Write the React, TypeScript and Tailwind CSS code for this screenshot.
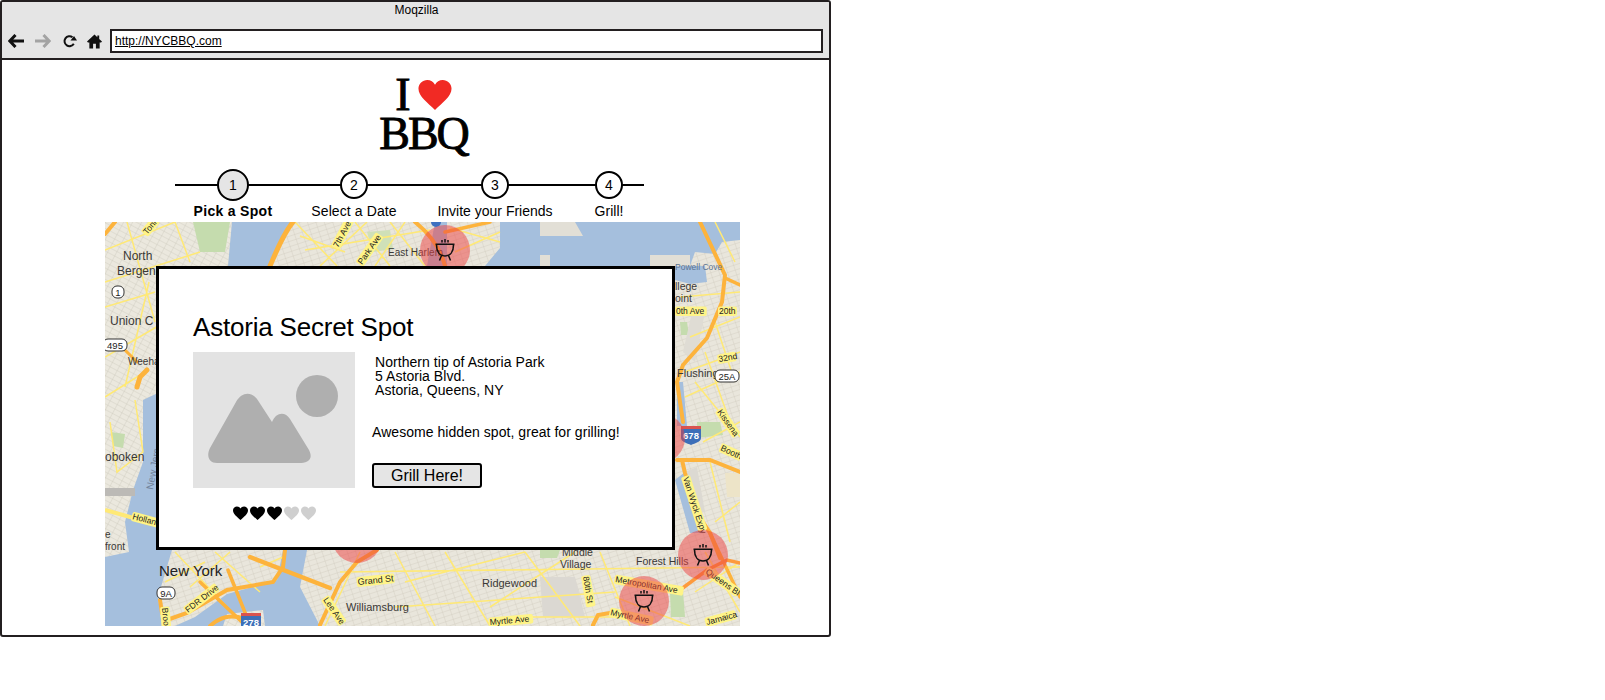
const sans = { fontFamily: '"Liberation Sans", Arial, sans-serif' };

function Heart({ className }: { className: string }) {
  return (
    <svg viewBox="0 0 32 30" className={className} fill="currentColor">
      <path d="M16 29C9 22 0 16 0 8.500C0 3.500 4 0 8.500 0C11.800 0 14.500 1.800 16 4.500C17.500 1.800 20.200 0 23.500 0C28 0 32 3.500 32 8.500C32 16 23 22 16 29Z" />
    </svg>
  );
}

function BrowserBar() {
  return (
    <div className="h-[58px] border-b-2 border-[#231f20] bg-[#e5e5e5]">
      <div className="h-[24px] pl-[2px] pt-[1px] text-center text-[12px] leading-[14px] text-black">Moqzilla</div>
      <div className="flex h-[27px] items-center pl-[6px] pr-[6px] pt-[3px]">
        <svg viewBox="0 0 16 14" className="h-[14px] w-[16px] text-[#111]">
          <path d="M7.500 1 1.800 7 7.500 13M2.500 7H16" fill="none" stroke="currentColor" strokeWidth="3" />
        </svg>
        <svg viewBox="0 0 16 14" className="ml-[11px] h-[14px] w-[16px] text-[#a3a3a3]">
          <path d="M8.500 1 14.200 7 8.500 13M13.500 7H0" fill="none" stroke="currentColor" strokeWidth="3" />
        </svg>
        <svg viewBox="0 0 15 14" className="ml-[11px] h-[14px] w-[15px] text-[#111]">
          <path d="M11.800 9.800A5 5 0 1 1 10.500 3.200" fill="none" stroke="currentColor" strokeWidth="2" />
          <path d="M8.500 6.500H15L12 2Z" fill="currentColor" />
        </svg>
        <svg viewBox="0 0 16 15" className="ml-[10px] h-[15px] w-[15px] text-[#111]">
          <path d="M8 0 0 7.500 1 8.500H2.500V15H6.500V10H9.500V15H13.500V8.500H15L16 7.500 13 4.700V1H11V2.900Z" fill="currentColor" />
        </svg>
        <div className="ml-[8px] flex h-[24px] flex-1 items-center border-2 border-[#231f20] bg-white pl-[3px] text-[12px] text-black underline">
          http://NYCBBQ.com
        </div>
      </div>
    </div>
  );
}

const steps = [
  { n: '1', label: 'Pick a Spot', active: true, w: 'w-[121px]', track: 'tracking-[0.3px]' },
  { n: '2', label: 'Select a Date', active: false, w: 'w-[141px]', track: 'tracking-[0.1px]' },
  { n: '3', label: 'Invite your Friends', active: false, w: 'w-[114px]', track: 'tracking-[0px]' },
  { n: '4', label: 'Grill!', active: false, w: 'w-[60px]', track: 'tracking-[0px]' },
];

function Stepper() {
  return (
    <div className="relative ml-[173px] mt-[13px] h-[53px] w-[469px]">
      <div className="absolute left-0 right-0 top-[15px] h-[2px] bg-black" />
      <div className="relative flex pl-[42px]">
        {steps.map((s) => (
          <div key={s.n} className={`flex ${s.w} shrink-0 flex-col items-start`}>
            <div className="relative h-[32px] w-[32px]">
              <div
                className={
                  s.active
                    ? 'absolute left-0 top-0 flex h-[32px] w-[32px] items-center justify-center rounded-full border-2 border-black bg-[#e5e5e5] text-[14px] leading-none'
                    : 'absolute left-[2px] top-[2px] flex h-[28px] w-[28px] items-center justify-center rounded-full border-2 border-black bg-white text-[14px] leading-none'
                }
              >
                {s.n}
              </div>
            </div>
            <div className="flex w-[32px] justify-center">
              <span className={`whitespace-nowrap text-[14px] leading-[20px] ${s.track} ${s.active ? 'font-bold' : 'font-normal'}`}>
                {s.label}
              </span>
            </div>
          </div>
        ))}
      </div>
    </div>
  );
}

function Grill({ x, y }: { x: number; y: number }) {
  return (
    <g transform={`translate(${x} ${y})`} fill="none" stroke="#111" strokeWidth="1.500">
      <circle r="25" fill="#ee3f3f" fillOpacity="0.5" stroke="none" />
      <path d="M-9.500-5.700H9.500M-8.500-5C-8.500 2-5 6 0 6S8.500 2 8.500-5" strokeWidth="1.600" />
      <path d="M-3.500 5.500-5.500 10.500M3.500 5.500 5.500 10.500M-3-10V-7.500M0-11V-7.500M3-10V-7.500" />
    </g>
  );
}

function MapLabel({ x, y, t, size = 11, rot = 0, road = false, color = '#3a3836' }: { x: number; y: number; t: string; size?: number; rot?: number; road?: boolean; color?: string }) {
  return (
    <g transform={`translate(${x} ${y}) rotate(${rot})`}>
      {road && <rect x={-1} y={-size + 1} width={t.length * size * 0.5 + 2} height={size + 1} fill="#fff487" rx="2" />}
      <text fontSize={size} fill={road ? '#222' : color} fontFamily="Liberation Sans, Arial, sans-serif">
        {t}
      </text>
    </g>
  );
}

function Shield({ x, y, t }: { x: number; y: number; t: string }) {
  return (
    <g transform={`translate(${x} ${y})`}>
      <rect x={-t.length * 3 - 3} y={-6} width={t.length * 6 + 6} height={12} rx={5} fill="#fff" stroke="#333" />
      <text textAnchor="middle" y={3.500} fontSize="9.500" fill="#222" fontFamily="Liberation Sans, Arial, sans-serif">{t}</text>
    </g>
  );
}

function Interstate({ x, y, t }: { x: number; y: number; t: string }) {
  return (
    <g transform={`translate(${x} ${y})`}>
      <path d="M-10-5H10V5C10 9 4 10 0 12C-4 10-10 9-10 5Z" fill="#3d6fb8" />
      <rect x="-10" y="-7" width="20" height="3" fill="#d9534f" />
      <text textAnchor="middle" y={5.500} fontSize="9.500" fontWeight="bold" fill="#fff" fontFamily="Liberation Sans, Arial, sans-serif">{t}</text>
    </g>
  );
}

function CityMap() {
  return (
    <svg viewBox="0 0 635 404" className="block h-[404px] w-[635px]">
      <defs>
        <pattern id="blocks" width="8" height="5" patternUnits="userSpaceOnUse" patternTransform="rotate(28)">
          <rect width="8" height="5" fill="#ebe8de" />
          <path d="M0 0H8M0 0V5" stroke="#c9c4b8" strokeWidth="0.700" />
        </pattern>
        <pattern id="blocks2" width="8" height="5" patternUnits="userSpaceOnUse" patternTransform="rotate(-18)">
          <rect width="8" height="5" fill="#e9e6dc" />
          <path d="M0 0H8M0 0V5" stroke="#cbc6ba" strokeWidth="0.700" />
        </pattern>
      </defs>
      <rect width="635" height="404" fill="url(#blocks2)" />
      <path d="M0 0H127L123 44 90 120 55 165 38 178V404H0Z" fill="url(#blocks)" />

      {/* water */}
      <path d="M127 0H187L165 44 130 100 67 328 53 375 57 404H0V335L24 330 20 300 28 268 38 240 38 178 55 170 100 90 123 44Z" fill="#a5bfdd" />
      <path d="M330 0H342V44H322Z" fill="#a5bfdd" />
      <path d="M395 0H635V18L617 20 610 32 590 30 585 44H380L395 26Z" fill="#a5bfdd" />
      <path d="M435 14H478L470 0H435ZM435 33H445V44H435ZM545 33H585V44H545Z" fill="#e2dfd6" />
      <path d="M570 44H600L602 60 585 62 570 58Z" fill="#a5bfdd" />
      <path d="M572 160H578L582 204 572 204ZM570 258 580 250 592 291 598 311 585 311Z" fill="#a5bfdd" />
      <path d="M178 328 172 358 122 372 90 395 70 404H215L195 365 202 328Z" fill="#a5bfdd" />
      <path d="M122 392 158 388 160 404H118Z" fill="url(#blocks)" />

      {/* parks and flat areas */}
      <path d="M88 0H125L120 30 95 30Z" fill="#c5dcae" />
      <path d="M262 10 285 8 288 27 268 30Z" fill="#cfe0b8" />
      <path d="M575 100 582 100 584 113 576 113Z" fill="#c5dcae" />
      <path d="M592 200H615L618 213 592 216Z" fill="#c5dcae" />
      <path d="M620 251H635V275L622 275Z" fill="#ede4c8" />
      <path d="M435 328 455 328 452 336 435 336Z" fill="#c5dcae" />
      <path d="M565 371 578 369 580 395 566 395Z" fill="#c5dcae" />
      <path d="M587 90 600 90 590 140 578 130Z" fill="#dfdcd4" />
      <path d="M580 250 592 245 600 290 590 290Z" fill="#dcd9d2" />
      <path d="M435 355 470 355 480 395 438 395Z" fill="#dbd8d2" />
      <path d="M0 266H30V274H0Z" fill="#bcbab6" />
      <path d="M6 210 20 212 18 226 8 224Z" fill="#c5dcae" />

      {/* minor roads */}
      <g fill="none" stroke="#ffe975" strokeWidth="1.500">
        <path d="M0 28 70 0M0 60 95 30M22 0 50 100M0 135 60 100M44 60 20 165M0 175 40 150M0 85 50 70M70 0 85 40" />
        <path d="M30 178 38 230 12 250 5 200M0 288 26 295" />
        <path d="M190 0 232 44M215 44 262 0M250 0 285 44M285 0 320 44M200 28 325 8M345 6 395 20M195 14 240 30M300 0 270 44M350 30 395 10" />
        <path d="M575 75 635 70M585 115 635 95M580 150 635 130M580 175 635 150M600 130 625 200M590 160 635 215M610 0 630 40M610 100 630 160" />
        <path d="M598 220 635 200M605 240 625 320M610 300 635 280M600 330 635 390M590 370 635 340" />
        <path d="M220 404 255 330M235 350 635 345M290 330 330 404M340 330 385 404M420 330 475 404M495 330 525 404M290 385 510 370M385 385 470 330M510 375 585 404M420 395 530 395M300 360 420 330" />
        <path d="M70 330 140 404M85 365 125 330M110 330 155 370M155 345 178 335M60 360 100 340" />
      </g>
      <path d="M0 288 25 295 52 300" fill="none" stroke="#ffe975" strokeWidth="4" />

      {/* highways */}
      <g fill="none" stroke="#fdb33c" strokeLinecap="round">
        <path d="M42 148 35 155 32 165" strokeWidth="5" />
        <path d="M18 126 32 140" strokeWidth="3" />
        <path d="M0 12 10 0" strokeWidth="4" />
        <path d="M165 44C172 28 178 12 188 0" strokeWidth="5" />
        <path d="M310 0C325 12 335 25 340 44" strokeWidth="4" />
        <path d="M340 10 385 0" strokeWidth="3.500" />
        <path d="M595 0 620 53 617 80 602 116 578 143 572 160 578 200" strokeWidth="4" />
        <path d="M620 56 635 63" strokeWidth="3.500" />
        <path d="M577 238 580 251 592 291 605 311 615 336" strokeWidth="4" />
        <path d="M572 238H605L635 250" strokeWidth="4" />
        <path d="M605 311 635 375" strokeWidth="3.500" />
        <path d="M575 368 602 348 622 338 635 341" stroke="#fd9a3c" strokeWidth="3.500" />
        <path d="M488 403 493 393 505 391" strokeWidth="4" />
        <path d="M180 328 178 345 168 360 122 368 82 391 62 398 57 391 55 378" strokeWidth="4" />
        <path d="M145 335 225 366" strokeWidth="4.500" />
        <path d="M123 348 145 403" strokeWidth="3.500" />
        <path d="M95 360 138 401" strokeWidth="3.500" />
        <path d="M215 403 235 360 252 340 272 328" strokeWidth="4" />
        <path d="M105 404C115 395 125 392 140 397" strokeWidth="4" />
      </g>
      <circle cx="331" cy="0" r="5" fill="#3d70c0" />

      {/* labels */}
      <MapLabel x={18} y={38} t="North" size={12} />
      <MapLabel x={12} y={53} t="Bergen" size={12} />
      <MapLabel x={5} y={103} t="Union C" size={12} />
      <MapLabel x={23} y={143} t="Weeha" size={10} />
      <MapLabel x={0} y={239} t="oboken" size={12} />
      <MapLabel x={0} y={316} t="e" size={10} />
      <MapLabel x={0} y={328} t="front" size={10} />
      <MapLabel x={48} y={268} t="New Jers" size={10} rot={-80} color="#6f8199" />
      <MapLabel x={27} y={297} t="Holland" size={8.500} rot={15} road />
      <MapLabel x={54} y={354} t="New York" size={15} color="#222" />
      <MapLabel x={253} y={363} t="Grand St" size={9} rot={-6} road />
      <MapLabel x={241} y={389} t="Williamsburg" size={11} />
      <MapLabel x={377} y={365} t="Ridgewood" size={11} />
      <MapLabel x={457} y={334} t="Middle" size={10.500} />
      <MapLabel x={455} y={346} t="Village" size={10.500} />
      <MapLabel x={531} y={343} t="Forest Hills" size={10.500} />
      <MapLabel x={572} y={155} t="Flushing" size={11} />
      <MapLabel x={570} y={48} t="Powell Cove" size={8.500} color="#5d7391" />
      <MapLabel x={570} y={68} t="llege" size={10.500} />
      <MapLabel x={570} y={80} t="oint" size={10.500} />
      <MapLabel x={571} y={92} t="0th Ave" size={8.500} road />
      <MapLabel x={614} y={92} t="20th" size={8.500} road />
      <MapLabel x={614} y={140} t="32nd" size={8.500} rot={-10} road />
      <MapLabel x={233} y={26} t="7th Ave" size={8.500} rot={-62} road />
      <MapLabel x={257} y={43} t="Park Ave" size={8.500} rot={-55} road />
      <MapLabel x={283} y={34} t="East Harlem" size={10} />
      <MapLabel x={42} y={13} t="Tonn" size={8.500} rot={-50} road />
      <MapLabel x={578} y={256} t="Van Wyck Expy" size={8.500} rot={72} road />
      <MapLabel x={615} y={228} t="Booth" size={8.500} rot={25} road />
      <MapLabel x={612} y={190} t="Kissena" size={8.500} rot={55} road />
      <MapLabel x={510} y={360} t="Metropolitan Ave" size={8.500} rot={10} road />
      <MapLabel x={505} y={393} t="Myrtle Ave" size={8.500} rot={12} road />
      <MapLabel x={600} y={351} t="Queens Bl" size={8.500} rot={35} road />
      <MapLabel x={602} y={403} t="Jamaica" size={8.500} rot={-15} road />
      <MapLabel x={385} y={403} t="Myrtle Ave" size={8.500} rot={-5} road />
      <MapLabel x={478} y={355} t="80th St" size={8.500} rot={80} road />
      <MapLabel x={83} y={391} t="FDR Drive" size={8.500} rot={-38} road />
      <MapLabel x={218} y={378} t="Lee Ave" size={8.500} rot={55} road />
      <MapLabel x={57} y={386} t="Brook" size={8.500} rot={85} road />
      <Shield x={13} y={70} t="1" />
      <Shield x={10} y={123} t="495" />
      <Shield x={61} y={371} t="9A" />
      <Shield x={622} y={154} t="25A" />
      <Interstate x={146} y={398} t="278" />
      <Interstate x={586} y={211} t="678" />
      <Grill x={340} y={28} />
      <Grill x={252} y={316} />
      <Grill x={598} y={333} />
      <Grill x={539} y={379} />
      <Grill x={555} y={216} />
    </svg>
  );
}

function SpotDialog() {
  return (
    <div className="absolute left-[51px] top-[44px] h-[284px] w-[519px] border-[3px] border-black bg-white pl-[34px] pt-[42px] text-black">
      <div className="text-[26px] leading-[32px] tracking-[-0.2px]">Astoria Secret Spot</div>
      <div className="mt-[9px] flex">
        <div className="w-[162px]">
          <div className="h-[136px] w-[162px] bg-[#e3e3e3]">
            <svg viewBox="0 0 162 136" className="h-[136px] w-[162px]">
              <circle cx="124" cy="44" r="21" fill="#afafaf" />
              <path d="M17 96 43 50C49 39 60 39 66 50L79 70C83 60 92 59 97 67L116 98C121 108 114 111 106 111H24C16 111 13 104 17 96Z" fill="#afafaf" />
            </svg>
          </div>
          <div className="mt-[18px] flex justify-center gap-[2px]">
            <Heart className="h-[15px] w-[15px] text-black" />
            <Heart className="h-[15px] w-[15px] text-black" />
            <Heart className="h-[15px] w-[15px] text-black" />
            <Heart className="h-[15px] w-[15px] text-[#cfcfcf]" />
            <Heart className="h-[15px] w-[15px] text-[#cfcfcf]" />
          </div>
        </div>
        <div className="ml-[17px] flex flex-col items-start pt-[3px] text-[14px] leading-[14px]">
          <div className="ml-[3px] tracking-[0.05px]">
            Northern tip of Astoria Park
            <br />
            5 Astoria Blvd.
            <br />
            Astoria, Queens, NY
          </div>
          <div className="mt-[25px] h-[20px] leading-[20px] tracking-[0.05px]">Awesome hidden spot, great for grilling!</div>
          <button className="mt-[21px] h-[25px] w-[110px] rounded-[3px] border-2 border-black bg-[#e5e5e5] text-center text-[16px] leading-none">
            Grill Here!
          </button>
        </div>
      </div>
    </div>
  );
}

export default function App() {
  return (
    <div className="h-[700px] w-[1605px] bg-white text-black" style={sans}>
      <div className="h-[637px] w-[831px] overflow-hidden rounded-[3px] border-2 border-[#231f20]">
        <BrowserBar />
        <div className="relative">
          <div
            className="flex h-[96px] flex-col items-center pl-[16px] pt-[16px] [-webkit-text-stroke:0.9px_black]"
            style={{ fontFamily: '"Liberation Serif", serif' }}
          >
            <div className="flex h-[38px] items-center text-[46px] leading-none">
              <span>I</span>
              <Heart className="ml-[7px] h-[31px] w-[34px] text-[#f12a24] [-webkit-text-stroke:0]" />
            </div>
            <div className="text-[46px] leading-[40px] tracking-[-2px]">BBQ</div>
          </div>
          <Stepper />
          <div className="relative ml-[103px] w-[635px]">
            <CityMap />
            <SpotDialog />
          </div>
        </div>
      </div>
    </div>
  );
}
